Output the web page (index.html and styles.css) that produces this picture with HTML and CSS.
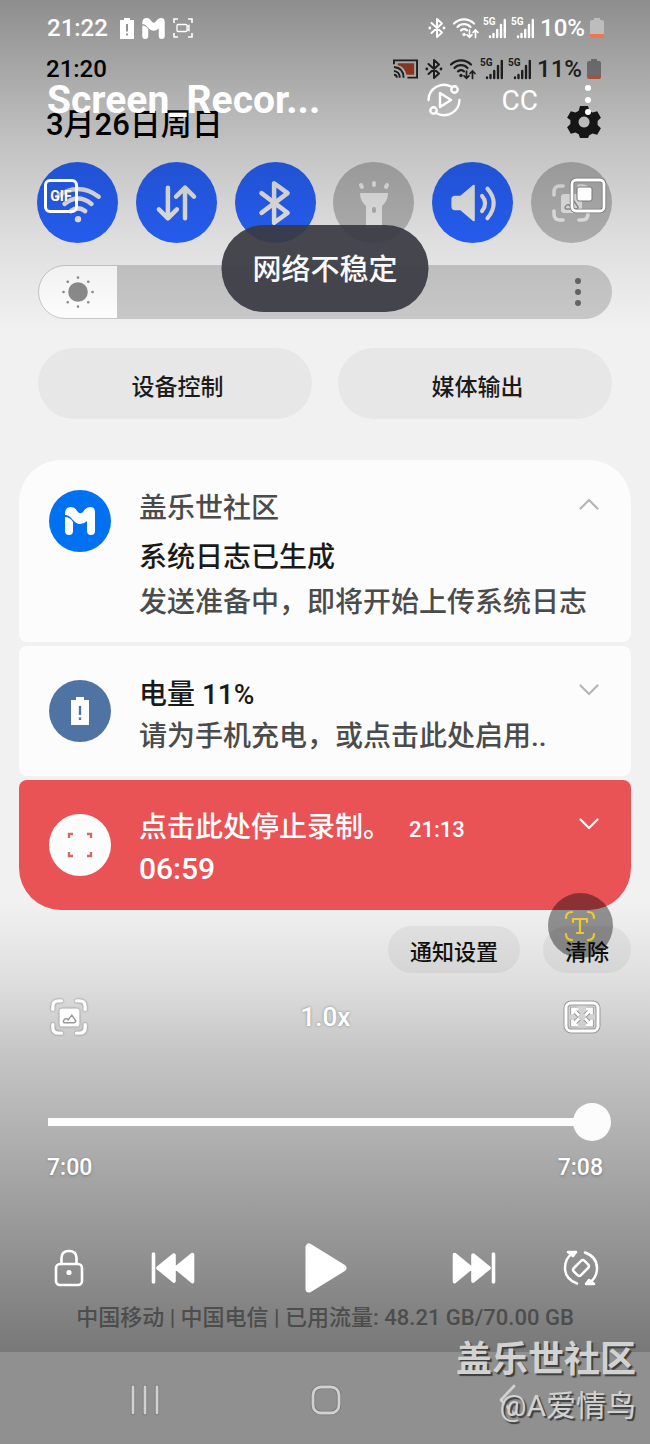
FILE: index.html
```html
<!DOCTYPE html>
<html lang="zh-CN">
<head>
<meta charset="utf-8">
<meta name="viewport" content="width=device-width, initial-scale=1">
<title>Screen_Recorder</title>
<link rel="stylesheet" href="styles.css">
</head>
<body>
<svg class="defs" aria-hidden="true">
  <symbol id="bt" viewBox="0 0 18 22"><path d="M3.500 6 14 15.500 9 20V2l5 4.500L3.500 16" fill="none" stroke="currentColor" stroke-width="2" stroke-linejoin="round" stroke-linecap="round"/><circle cx="1.800" cy="11" r="1.400" fill="currentColor"/><circle cx="16" cy="11" r="1.400" fill="currentColor"/></symbol>
  <symbol id="wifi" viewBox="0 0 26 22"><g fill="none" stroke="currentColor" stroke-width="2.200" stroke-linecap="round"><path d="M1 6.500a14 14 0 0 1 20 0M4.500 10a9 9 0 0 1 13 0M8 13.300a5 5 0 0 1 6 0"/><path d="M16.500 13v7M14 17.800l2.500 2.500 2.500-2.500M22.500 20.500v-7M20 15.500l2.500-2.500 2.500 2.500" stroke-width="1.700"/></g><circle cx="11" cy="17.500" r="1.700" fill="currentColor"/></symbol>
  <symbol id="signal" viewBox="0 0 22 22"><text x="-1" y="8" font-size="10" font-weight="700" fill="currentColor">5G</text><path d="M6 19.500v.5M9.500 17v3M13.200 13v7M17 8v12M20.800 3v17" stroke="currentColor" stroke-width="2.400" stroke-linecap="round"/></symbol>
  <symbol id="mark" viewBox="0 0 30 28"><path d="M0 7Q0 0 6 0q4 0 6 4 3 4 6 1 3-5 7-5 5 0 5 5v19a4 4 0 0 1-8 0V14q-3 3-7 3-4 0-8-5-3-4-7-4zM0 10q5 0 8 5v9a4 4 0 0 1-8 0z" fill="currentColor"/></symbol>
  <symbol id="batt" viewBox="0 0 14 21"><path d="M4 0h6v2h4v19H0V2h4z" fill="currentColor"/><path class="batt-cut" d="M7 6v7.500M7 15.500v2" stroke-width="2"/></symbol>
  <symbol id="frame" viewBox="0 0 40 40"><path d="M3 12V9q0-6 6-6h3M28 3h3q6 0 6 6v3M37 28v3q0 6-6 6h-3M12 37H9q-6 0-6-6v-3" fill="none" stroke="currentColor" stroke-width="3.600" stroke-linecap="round"/></symbol>
  <symbol id="shot" viewBox="0 0 40 40"><use href="#frame"/><rect x="10" y="11" width="21" height="19" rx="3" fill="currentColor"/><path d="M14 25q1-4 4-3l1 1 4-5 4 6q0 2-2 2H15z" fill="none" class="shot-hill" stroke-width="1.500"/></symbol>
  <symbol id="chev" viewBox="0 0 20 12"><path d="m1.500 1.500 8.500 8.500 8.500-8.500" fill="none" stroke="currentColor" stroke-width="2.200" stroke-linecap="round" stroke-linejoin="round"/></symbol>
  <symbol id="arrows" viewBox="0 0 38 34"><path d="M16 15.500l-5.500-5.500M9.500 14.500V9h5.500M22 15.500l5.500-5.500M28.500 14.500V9H23M16 18.500l-5.500 5.500M9.500 19.500V25h5.500M22 18.500l5.500 5.500M28.500 19.500V25H23" fill="none"/></symbol>
</svg>

<div class="screen">
  <main class="shade">
    <div class="status status-dark">
      <time>21:20</time>
      <div class="status-icons">
        <svg class="cast" viewBox="0 0 26 20"><path d="M5 4h17v12h-8Q12 7 5 6z" fill="#c14e2b"/><path d="M1 5V1h24v18H15M1 8q10 1 10 11M1 12q6 1 6 7M1 16q3 0 3 3" fill="none" stroke="currentColor" stroke-width="2"/></svg>
        <svg class="i-bt"><use href="#bt"/></svg>
        <svg class="i-wifi"><use href="#wifi"/></svg>
        <svg class="i-sig"><use href="#signal"/></svg>
        <svg class="i-sig"><use href="#signal"/></svg>
        <span>11%</span>
        <svg class="i-batt" viewBox="0 0 14 20"><path d="M4 0h6v2h2q2 0 2 2v12H0V4q0-2 2-2h2z" fill="#999"/><path d="M0 16h14v2q0 2-2 2H2q-2 0-2-2z" fill="#e8745a"/></svg>
      </div>
    </div>

    <header class="date-row">
      <h1 class="date">3月26日周日</h1>
      <button class="icon-button" aria-label="设置">
        <svg class="gear" viewBox="0 0 34 34"><path fill-rule="evenodd" fill="#1c1c1c" d="M13 1h8l1.300 4.700 3.200 1.900 4.700-1.400 3.700 6.600-3.300 3.300v3.800l3.300 3.300-3.700 6.600-4.700-1.400-3.200 1.900L21 33h-8l-1.300-3.700-3.200-1.900-4.700 1.400-3.700-6.600 3.300-3.300v-3.800L.1 12.800l3.700-6.600 4.700 1.400 3.200-1.900zM17 11.500a5.500 5.500 0 1 0 .1 0z"/></svg>
      </button>
    </header>

    <section class="tiles" aria-label="快捷设置">
      <button class="tile tile-on" aria-label="WLAN"><svg viewBox="0 0 40 40"><g fill="none" stroke="currentColor" stroke-width="5" stroke-linecap="round"><path d="M-3 13Q20-4 43 13M5 21q15-12 30 0M12 29q8-6 16 0"/></g><circle cx="20" cy="38" r="3.500" fill="currentColor"/></svg></button>
      <button class="tile tile-on" aria-label="移动数据"><svg viewBox="0 0 40 40"><path d="M11 3v34M1 27l10 10 10-10M30 37V3M20 13 30 3l10 10" fill="none" stroke="currentColor" stroke-width="5" stroke-linecap="round" stroke-linejoin="round"/></svg></button>
      <button class="tile tile-on" aria-label="蓝牙"><svg viewBox="0 0 40 40"><path d="M5 9l29 22-15 11V-2L34 9 5 31" fill="none" stroke="currentColor" stroke-width="5" stroke-linecap="round" stroke-linejoin="round"/></svg></button>
      <button class="tile" aria-label="手电筒"><svg viewBox="0 0 40 40"><path d="M7 2l1 2M20 0v2M33 2l-1 2" stroke="currentColor" stroke-width="4" stroke-linecap="round"/><path fill-rule="evenodd" d="M6 10h28q0 8-6 13v22H12V23Q6 18 6 10zm14 14a2 2 0 0 0-2 2v2a2 2 0 0 0 4 0v-2a2 2 0 0 0-2-2z" fill="currentColor"/></svg></button>
      <button class="tile tile-on" aria-label="声音"><svg viewBox="0 0 40 40"><path d="M0 12h6L20 0q2-1 2 1v38q0 2-2 1L6 28H0q-4 0-4-4v-8q0-4 4-4z" fill="currentColor"/><path d="M30 12q7 8 0 17M36 4q14 16 0 33" fill="none" stroke="currentColor" stroke-width="4.500" stroke-linecap="round"/></svg></button>
      <button class="tile" aria-label="截屏"><svg viewBox="0 0 40 40"><use href="#shot"/></svg></button>
    </section>

    <div class="brightness">
      <input type="range" min="0" max="100" value="14" aria-label="亮度">
      <svg class="sun" viewBox="0 0 34 34"><circle cx="17" cy="17" r="9.800" fill="#8d8d8d"/><path d="M17 2.500v.1M17 31.500v.1M2.500 17h.1M31.500 17h.1M6.700 6.700h.1M27.200 6.700h.1M6.700 27.200h.1M27.200 27.200h.1" stroke="#8d8d8d" stroke-width="2.600" stroke-linecap="round"/></svg>
      <button class="bright-more" aria-label="更多亮度选项"><svg viewBox="0 0 6 28"><g fill="#666"><circle cx="3" cy="3" r="3"/><circle cx="3" cy="14" r="3"/><circle cx="3" cy="25" r="3"/></g></svg></button>
    </div>

    <div class="pair">
      <button class="wide">设备控制</button>
      <button class="wide">媒体输出</button>
    </div>

    <section class="cards">
      <article class="card card-first">
        <span class="avatar avatar-blue"><svg class="a-mark"><use href="#mark"/></svg></span>
        <div class="card-text">
          <p class="app">盖乐世社区</p>
          <h2 class="card-title">系统日志已生成</h2>
          <p class="desc">发送准备中，即将开始上传系统日志</p>
        </div>
        <button class="chev chev-up" aria-label="收起"><svg><use href="#chev"/></svg></button>
      </article>
      <article class="card card-mid">
        <span class="avatar avatar-steel"><svg class="a-batt" viewBox="0 0 18 28"><path d="M5 0h8v3h5v25H0V3h5z" fill="#fff"/><path d="M9 9v9M9 20.500v2.500" stroke="#4f73a3" stroke-width="2.400"/></svg></span>
        <div class="card-text">
          <h2 class="card-title">电量 11%</h2>
          <p class="desc">请为手机充电，或点击此处启用..</p>
        </div>
        <button class="chev" aria-label="展开"><svg><use href="#chev"/></svg></button>
      </article>
      <article class="card card-last">
        <span class="avatar avatar-white"><svg class="a-rec" viewBox="0 0 26 26"><path d="M2 6V2h4M20 2h4v4M24 20v4h-4M6 24H2v-4" fill="none" stroke="#cf6a68" stroke-width="2.400"/></svg></span>
        <div class="card-text">
          <h2 class="card-title">点击此处停止录制。<time class="ago">21:13</time></h2>
          <p class="elapsed">06:59</p>
        </div>
        <button class="chev" aria-label="展开"><svg><use href="#chev"/></svg></button>
      </article>
    </section>

    <div class="card-actions">
      <button class="pill">通知设置</button>
      <div class="clear-wrap">
        <button class="pill">清除</button>
        <button class="text-bubble" aria-label="提取文字"><svg viewBox="0 0 32 32"><path d="M2 8q0-6 6-6M24 2q6 0 6 6M30 24q0 6-6 6M8 30q-6 0-6-6M9 12V9h14v3M16 9v14M13 23h6" fill="none" stroke="#f0cf2e" stroke-width="2.200" stroke-linecap="round" stroke-linejoin="round"/></svg></button>
      </div>
    </div>

    <p class="carrier">中国移动 | 中国电信 | 已用流量: 48.21 GB/70.00 GB</p>
  </main>

  <section class="player" aria-label="视频播放器">
    <div class="status status-light">
      <div class="status-left">
        <time>21:22</time>
        <svg class="i-low"><use href="#batt"/></svg>
        <svg class="i-mark"><use href="#mark"/></svg>
        <svg class="i-rec" viewBox="0 0 20 20"><path d="M1 5V1h4M15 1h4v4M19 15v4h-4M5 19H1v-4" fill="none" stroke="currentColor" stroke-width="1.600"/><path d="M5 6.500h8q1 0 1 1v5q0 1-1 1H5q-1 0-1-1v-5q0-1 1-1zM14 9l2-1.500v5L14 11" fill="none" stroke="currentColor" stroke-width="1.300"/></svg>
      </div>
      <div class="status-icons">
        <svg class="i-bt"><use href="#bt"/></svg>
        <svg class="i-wifi"><use href="#wifi"/></svg>
        <svg class="i-sig"><use href="#signal"/></svg>
        <svg class="i-sig"><use href="#signal"/></svg>
        <span>10%</span>
        <svg class="i-batt" viewBox="0 0 14 20"><path d="M4 0h6v2h2q2 0 2 2v12H0V4q0-2 2-2h2z" fill="#bdbdbd"/><path d="M0 16h14v2q0 2-2 2H2q-2 0-2-2z" fill="#f0764e"/></svg>
      </div>
    </div>

    <div class="title-row">
      <h2 class="video-title">Screen_Recor...</h2>
      <div class="title-tools">
        <button class="icon-button" aria-label="播放设置"><svg class="loop" viewBox="0 0 34 34"><g fill="none" stroke="currentColor" stroke-width="2.400" stroke-linecap="round" stroke-linejoin="round"><path d="M1.500 17A15.500 15.500 0 0 1 24 3.500M32.500 17A15.500 15.500 0 0 1 10 30.500"/><circle cx="27.500" cy="6.500" r="3.200"/><circle cx="6.500" cy="27.500" r="3.200"/><path d="M13 10v14l11-7z"/></g></svg></button>
        <button class="icon-button cc">CC</button>
        <button class="icon-button" aria-label="更多选项"><svg class="dots" viewBox="0 0 6 30"><g fill="#fff"><circle cx="3" cy="3" r="3"/><circle cx="3" cy="15" r="3"/><circle cx="3" cy="27" r="3"/></g></svg></button>
      </div>
    </div>

    <div class="corner-row">
      <button class="gif">GIF</button>
      <button class="icon-button" aria-label="弹出窗口"><svg class="popup" viewBox="0 0 36 36"><rect x="2" y="2" width="32" height="31" rx="4" fill="none" stroke="#777" stroke-width="4.400"/><rect x="2" y="2" width="32" height="31" rx="4" fill="none" stroke="#fff" stroke-width="2.800"/><rect x="7" y="9" width="15" height="14" rx="2" fill="#fff" stroke="#777"/></svg></button>
    </div>

    <div class="player-bottom">
      <div class="speed-row">
        <button class="icon-button outlined" aria-label="捕获画面"><svg class="capture"><use href="#shot"/></svg></button>
        <button class="icon-button speed">1.0x</button>
        <button class="icon-button" aria-label="调整画面"><svg class="expand" viewBox="0 0 38 34"><g stroke="#999"><rect x="3" y="3" width="32" height="28" rx="5" fill="none" stroke-width="5"/><use href="#arrows" stroke-width="4.600"/></g><g stroke="#fff"><rect x="3" y="3" width="32" height="28" rx="5" fill="none" stroke-width="3"/><use href="#arrows" stroke-width="2.800"/></g></svg></button>
      </div>
      <input class="seek" type="range" min="0" max="428" value="420" aria-label="播放进度">
      <div class="times"><time>7:00</time><time>7:08</time></div>
      <div class="controls">
        <button class="icon-button" aria-label="锁定"><svg class="lock" viewBox="0 0 30 38"><g fill="none" stroke="#fff" stroke-width="2.600"><rect x="2" y="15" width="26" height="21" rx="4"/><path d="M7.500 15V9q0-7 7.500-7t7.500 7v6"/></g><circle cx="15" cy="23.500" r="2.600" fill="#fff"/></svg></button>
        <button class="icon-button" aria-label="上一个"><svg class="skip" viewBox="0 0 44 32"><path d="M2.500 2v28M23 3 7 16l16 13zM41.500 2.500 25 16l16.500 13.500z" fill="#fff" stroke="#fff" stroke-width="3.600" stroke-linejoin="round" stroke-linecap="round"/></svg></button>
        <button class="icon-button" aria-label="播放"><svg class="play" viewBox="0 0 42 50"><path d="M4 4v42l34-21z" fill="#fff" stroke="#fff" stroke-width="7" stroke-linejoin="round"/></svg></button>
        <button class="icon-button" aria-label="下一个"><svg class="skip" viewBox="0 0 44 32"><path d="M41.500 2v28M21 3l16 13-16 13zM2.500 2.500 19 16 2.500 29.500z" fill="#fff" stroke="#fff" stroke-width="3.600" stroke-linejoin="round" stroke-linecap="round"/></svg></button>
        <button class="icon-button" aria-label="旋转屏幕"><svg class="rotate" viewBox="0 0 36 36"><g fill="none" stroke="#fff" stroke-width="2.500" stroke-linecap="round" stroke-linejoin="round"><path d="M14 33.500Q2 29 2 18 2 8 10 3M22 2.500Q34 7 34 18q0 10-8 15M5 2h8l-3 4zM31 34h-8l3-4z"/><rect x="-7.500" y="-5" width="15" height="10" rx="2.500" transform="translate(18 18) rotate(-45)"/></g></svg></button>
      </div>
    </div>
  </section>

  <nav class="navbar" aria-label="系统导航">
    <button class="icon-button" aria-label="最近"><svg class="n-recent" viewBox="0 0 30 32"><g stroke-linecap="round"><path d="M3 3v26M15 3v26M27 3v26" stroke="#777" stroke-width="4.400"/><path d="M3 3v26M15 3v26M27 3v26" stroke="#d0d0d0" stroke-width="2.800"/></g></svg></button>
    <button class="icon-button" aria-label="主页"><svg class="n-home" viewBox="0 0 32 32"><rect x="3" y="3" width="26" height="26" rx="8" fill="none" stroke="#777" stroke-width="4.400"/><rect x="3" y="3" width="26" height="26" rx="8" fill="none" stroke="#d0d0d0" stroke-width="2.800"/></svg></button>
    <button class="icon-button" aria-label="返回"><svg class="n-back" viewBox="0 0 18 32"><path d="M16 2 3 16l13 14" fill="none" stroke="#d0d0d0" stroke-width="2.800" stroke-linecap="round" stroke-linejoin="round"/></svg></button>
  </nav>

  <div class="toast" role="status">网络不稳定</div>
  <div class="watermark"><strong>盖乐世社区</strong><span>@A爱情鸟</span></div>
</div>
</body>
</html>
```
FILE: styles.css
```css
* { box-sizing: border-box; }

body {
  margin: 0;
  font-family: Roboto, "Noto Sans CJK SC", sans-serif;
  font-weight: 500;
  background: #f1f1f1;
}

h1, h2, p { margin: 0; font-weight: 500; }

button {
  padding: 0;
  border: 0;
  background: none;
  color: inherit;
  font: inherit;
}

svg { display: block; overflow: visible; flex: none; }
symbol { overflow: visible; }

.defs { position: absolute; width: 0; height: 0; }

.screen {
  position: relative;
  display: grid;
  grid-template-rows: 1fr auto;
  min-height: 100vh;
}

.shade, .player { grid-area: 1 / 1; display: flex; flex-direction: column; min-width: 0; }

.shade { padding-top: 48px; }

.player {
  position: relative;
  color: #fff;
  background:
    linear-gradient(rgba(0, 0, 0, .41), rgba(0, 0, 0, .2) 140px, rgba(0, 0, 0, .08) 240px, rgba(0, 0, 0, 0) 330px),
    linear-gradient(to top, rgba(0, 0, 0, .5), rgba(0, 0, 0, .34) 150px, rgba(0, 0, 0, .18) 300px, rgba(0, 0, 0, .08) 370px, rgba(0, 0, 0, 0) 450px);
}

/* status bars */
.status {
  display: flex;
  align-items: center;
  justify-content: space-between;
  font-size: 24px;
}
.status-dark { height: 42px; padding: 0 49px 0 46px; color: #000; }
.status-light { height: 56px; padding: 0 46px 0 47px; }
.status-left, .status-icons { display: flex; align-items: center; }
.status-left { gap: 8px; }
.status-left time { margin-right: 4px; }
.status-icons { gap: 5px; }
.status-dark .status-icons { color: #2b2b2b; }
.i-bt { width: 18px; height: 22px; margin-right: 2px; }
.i-wifi { width: 26px; height: 22px; }
.i-sig { width: 22px; height: 22px; margin-right: 1px; }
.i-batt { width: 14px; height: 20px; }
.i-low { width: 14px; height: 21px; }
.i-mark { width: 23px; height: 21px; }
.i-rec { width: 20px; height: 20px; }
.cast { width: 25px; height: 20px; margin-right: 2px; }
.batt-cut { stroke: #939393; }
.shot-hill { stroke: #999; }

.date-row {
  display: flex;
  align-items: center;
  justify-content: space-between;
  height: 70px;
  padding: 0 49px 0 46px;
}
.date { font-size: 31px; line-height: 40px; color: #000; }
.gear { width: 34px; height: 34px; margin-bottom: 6px; }

/* quick settings */
.tiles {
  display: flex;
  justify-content: space-between;
  margin-top: 2px;
  padding: 0 38px 0 37px;
}
.tile {
  display: grid;
  place-items: center;
  width: 81px;
  height: 81px;
  border-radius: 50%;
  background: #b9b9b9;
  color: #f0f0f0;
}
.tile-on { background: #2863ff; }
.tile svg { width: 40px; height: 40px; }
.tile-on svg { width: 36px; height: 36px; }
.tile .shot-hill { stroke: #b9b9b9; }

.brightness { position: relative; margin: 22px 38px 0; height: 54px; }
.brightness input {
  display: block;
  width: 100%;
  height: 100%;
  margin: 0;
  appearance: none;
  border: 1px solid #c9c9c9;
  border-radius: 27px;
  background: linear-gradient(to right, #fff 78px, #c9c9c9 78px);
}
.brightness input::-webkit-slider-thumb { appearance: none; width: 1px; height: 1px; }
.sun { position: absolute; left: 23px; top: 10px; width: 34px; height: 34px; }
.bright-more { position: absolute; right: 31px; top: 13px; }
.bright-more svg { width: 6px; height: 28px; }

.pair { display: flex; gap: 26px; margin: 29px 38px 0; }
.wide {
  flex: 1;
  height: 71px;
  padding: 2px 0 0 5px;
  border-radius: 36px;
  background: #e7e7e7;
  color: #1b1b1b;
  font-size: 23px;
}

/* notifications */
.cards { display: flex; flex-direction: column; gap: 4px; margin: 41px 19px 0; }
.card {
  display: flex;
  align-items: flex-start;
  gap: 28px;
  padding: 30px 32px 20px 30px;
  border-radius: 8px;
  background: #fcfcfc;
}
.card-first { border-radius: 42px 42px 8px 8px; padding-bottom: 18px; }
.card-mid, .card-last { padding-top: 34px; }
.card-last { padding-bottom: 22px; border-radius: 8px 8px 42px 42px; background: #ea5356; color: #fff; }
.card-text { flex: 1; min-width: 0; margin-top: -6px; font-size: 28px; line-height: 42px; white-space: nowrap; }
.card-first .card-text { margin-top: -2px; }
.card-mid .card-text { margin-bottom: -2px; }
.app, .desc { color: #4b4b4b; }
.card-title { font-size: 28px; color: #1a1a1a; }
.card-first .card-title { margin: 7px 0 3px; }
.card-last .card-title { line-height: 40px; color: #fff; }
.ago { margin-left: 18px; font-size: 22px; }
.elapsed { font-size: 30px; line-height: 38px; }
.avatar { display: grid; place-items: center; flex: none; width: 62px; height: 62px; border-radius: 50%; color: #fff; }
.avatar-blue { background: #0071f0; }
.avatar-steel { background: #4f73a3; }
.avatar-white { background: #fcfcfc; }
.a-mark { width: 30px; height: 28px; }
.a-batt { width: 18px; height: 28px; }
.a-rec { width: 26px; height: 26px; }
.chev { margin: 4px 0 0 -48px; color: #b5b5b5; }
.chev svg { width: 20px; height: 12px; }
.chev-up { margin-top: 8px; }
.chev-up svg { transform: scaleY(-1); }
.card-last .chev { color: #fff; }

.card-actions { display: flex; justify-content: flex-end; gap: 23px; margin: 16px 19px 0; }
.pill {
  height: 47px;
  padding: 0 22px;
  border-radius: 24px;
  background: #e5e5e5;
  color: #111;
  font-size: 22px;
}
.clear-wrap { position: relative; }
.text-bubble {
  position: absolute;
  left: 5px;
  top: -33px;
  display: grid;
  place-items: center;
  width: 65px;
  height: 65px;
  border-radius: 50%;
  background: rgba(0, 0, 0, .4);
}
.text-bubble svg { width: 32px; height: 32px; }

.carrier {
  margin-top: auto;
  padding: 0 20px 18px;
  font-size: 22px;
  line-height: 32px;
  text-align: center;
  color: #8f8f8f;
}

/* video player */
.icon-button { display: grid; place-items: center; }
.title-row {
  display: flex;
  align-items: center;
  justify-content: space-between;
  height: 88px;
  padding: 0 59px 0 47px;
}
.video-title { font-size: 39px; line-height: 48px; font-weight: 700; }
.title-tools { display: flex; align-items: center; }
.loop { width: 34px; height: 34px; }
.cc { margin: 0 47px 0 41px; font-size: 28px; font-weight: 400; }
.dots { width: 6px; height: 30px; }

.corner-row {
  display: flex;
  align-items: center;
  justify-content: space-between;
  height: 104px;
  padding: 0 44px;
}
.gif {
  width: 34px;
  height: 34px;
  border: 3px solid #fff;
  border-radius: 6px;
  font-size: 14px;
  font-weight: 700;
  text-shadow: 0 0 2px #555;
}
.popup { width: 36px; height: 36px; }

.player-bottom { margin-top: auto; padding: 0 39px 54px 47px; }
.speed-row {
  display: grid;
  grid-template-columns: 1fr auto 1fr;
  align-items: center;
  height: 46px;
  padding: 0 10px 0 3px;
}
.speed-row > :first-child { justify-self: start; }
.speed-row > :last-child { justify-self: end; }
.outlined svg { filter: drop-shadow(0 0 1px #777); }
.capture { width: 38px; height: 38px; }
.expand { width: 38px; height: 34px; }
.speed { font-size: 26px; text-shadow: 0 0 3px #888; }

.seek {
  display: block;
  width: calc(100% + 9px);
  height: 38px;
  margin: 63px 0 12px 1px;
  appearance: none;
  background: linear-gradient(#fcfcfc, #fcfcfc) left center / 95% 8px no-repeat;
  border-radius: 4px;
}
.seek::-webkit-slider-thumb {
  appearance: none;
  width: 38px;
  height: 38px;
  border-radius: 50%;
  background: #fcfcfc;
}
.times {
  display: flex;
  justify-content: space-between;
  padding-right: 8px;
  font-size: 23px;
  line-height: 30px;
  text-shadow: 0 1px 3px #777;
}
.controls {
  display: flex;
  align-items: center;
  justify-content: space-between;
  height: 60px;
  margin-top: 55px;
  padding: 0 12px 0 7px;
}
.lock { width: 30px; height: 38px; }
.skip { width: 44px; height: 32px; margin: 0 30px; }
.play { width: 42px; height: 50px; margin: 0 38px 0 42px; }
.rotate { width: 36px; height: 36px; }

.navbar {
  grid-area: 2 / 1;
  display: grid;
  grid-template-columns: repeat(3, 181px);
  justify-content: center;
  height: 92px;
  padding: 4px 0 0 2px;
  background: #909090;
}
.n-recent { width: 30px; height: 32px; }
.n-home { width: 32px; height: 32px; }
.n-back { width: 18px; height: 32px; }

/* floating layers */
.toast {
  position: absolute;
  top: 225px;
  left: 50%;
  transform: translateX(-50%);
  padding: 24px 31px 20px;
  border-radius: 43px;
  background: rgba(57, 58, 67, .93);
  color: #fafafa;
  font-size: 29px;
  line-height: 43px;
  white-space: nowrap;
}
.watermark {
  position: absolute;
  right: 14px;
  bottom: 16px;
  display: flex;
  flex-direction: column;
  align-items: flex-end;
  color: #d2d2d2;
  text-shadow: 2px 2px 1px #3d3d3d;
  white-space: nowrap;
}
.watermark strong { font-size: 36px; line-height: 48px; font-weight: 700; }
.watermark span { font-size: 30px; line-height: 44px; font-weight: 400; }
```
